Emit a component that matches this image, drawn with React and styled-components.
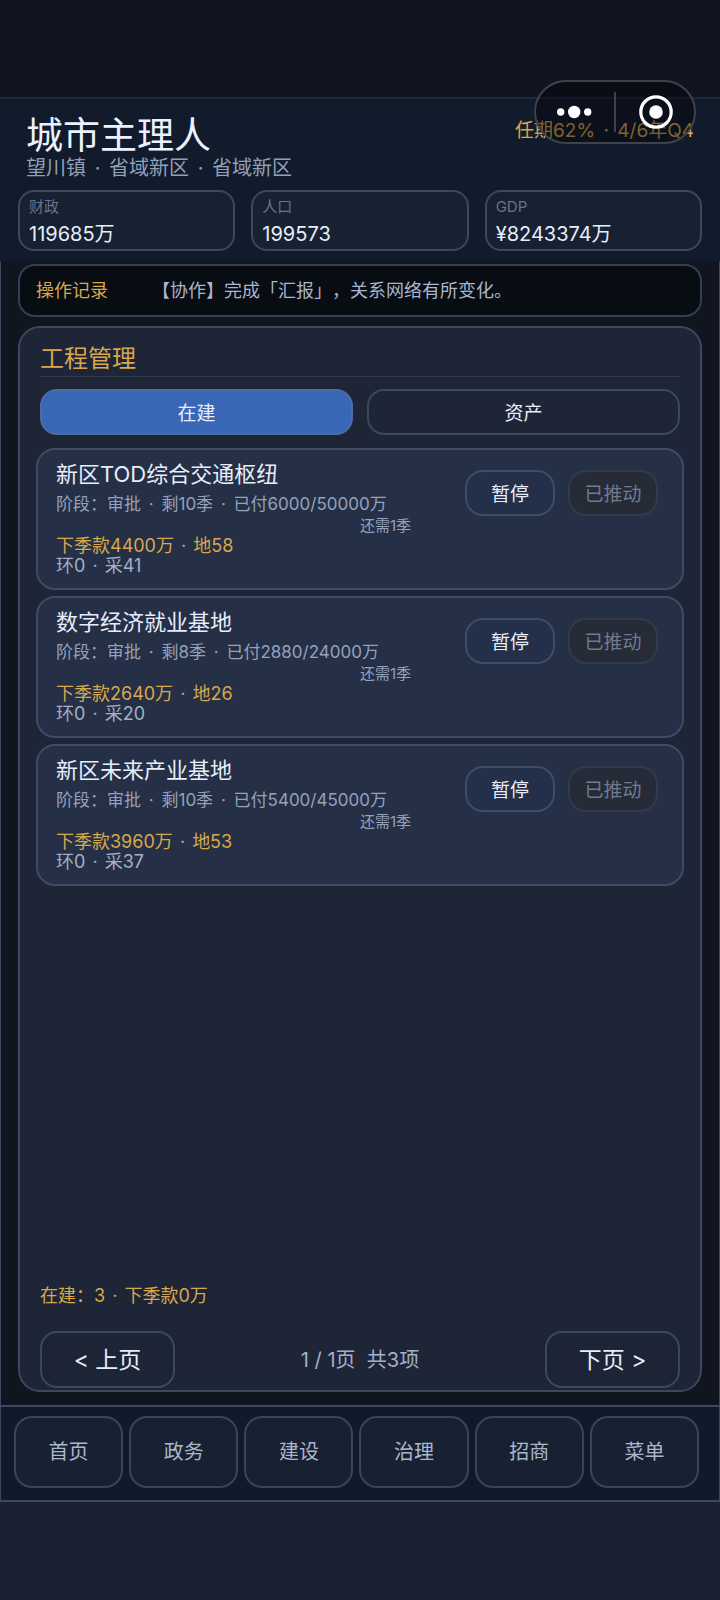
import React, { Fragment, useState } from "react";
import styled, { createGlobalStyle } from "styled-components";

const GlobalStyle = createGlobalStyle`
  *, *::before, *::after { box-sizing: border-box; }
  body {
    margin: 0;
    background: #1a2132;
    color: #e6edfb;
    font-family: Inter, "Noto Sans CJK SC", sans-serif;
    font-size: 18px;
    font-weight: 400;
    text-spacing-trim: space-all;
  }
  button { font-family: inherit; }
  h1, h2, h3, p, dl, dt, dd, ul { margin: 0; padding: 0; font-weight: 400; }
`;

const line = "#3a4860";
const gold = "#d9a74c";

const Screen = styled.div`
  position: relative;
  min-height: 100vh;
  display: flex;
  flex-direction: column;
  background: #10151f;
  padding-top: 97px;
`;

const Header = styled.header`
  background: #121b2b;
  border-top: 2px solid #1f2939;
  padding: 16px 18px 10px;
`;

const TitleRow = styled.div`
  display: flex;
  justify-content: space-between;
  padding: 0 8px;
`;

const AppTitle = styled.h1`
  font-size: 37px;
  line-height: 42px;
  color: #eaf1ff;
`;

const Place = styled.p`
  font-size: 20px;
  line-height: 22px;
  color: #93a1b8;
`;

const Term = styled.p`
  font-size: 19px;
  line-height: 32px;
  color: ${gold};
`;

const Dot = styled.span`
  margin: 0 ${(p) => (p.$wide ? 3 : 2)}px;
`;

const Stats = styled.dl`
  display: grid;
  grid-template-columns: repeat(3, 1fr);
  gap: 16px;
  padding-top: 11px;
`;

const Stat = styled.div`
  height: 61px;
  padding: 3px 9px;
  background: #182131;
  border: 2px solid ${line};
  border-radius: 16px;
`;

const StatName = styled.dt`
  font-size: 15px;
  line-height: 24px;
  color: #66748c;
`;

const StatValue = styled.dd`
  font-size: 20px;
  line-height: 30px;
`;

const Body = styled.div`
  flex: 1;
  display: flex;
  flex-direction: column;
  border: solid ${line};
  border-width: 0 1px 2px;
`;

const Main = styled.main`
  flex: 1;
  display: flex;
  flex-direction: column;
  gap: 9px;
  padding: 3px 17px 13px;
`;

const Log = styled.section`
  display: flex;
  align-items: center;
  gap: 44px;
  height: 53px;
  padding: 0 16px 4px;
  background: #080c13;
  border: 2px solid #353f51;
  border-radius: 17px;
`;

const LogTitle = styled.h2`
  font-size: 18px;
  color: ${gold};
`;

const LogText = styled.p`
  font-size: 18px;
  color: #a9b6cb;
`;

const Panel = styled.section`
  flex: 1;
  display: flex;
  flex-direction: column;
  padding: 14px 16px 2px;
  background: #1d2537;
  border: 2px solid ${line};
  border-radius: 22px;
`;

const PanelTitle = styled.h2`
  margin: 0 4px;
  height: 35px;
  font-size: 24px;
  line-height: 34px;
  color: ${gold};
  border-bottom: 1px solid #2d384b;
`;

const Tabs = styled.div`
  display: grid;
  grid-template-columns: 1fr 1fr;
  gap: 14px;
  margin: 12px 4px 13px;
`;

const Tab = styled.button`
  height: 46px;
  padding: 0 0 2px;
  font-size: 19px;
  color: #e6edfb;
  background: ${(p) => (p.$active ? "#3a67b5" : "transparent")};
  border: 2px solid ${(p) => (p.$active ? "#4c6da6" : line)};
  border-radius: 17px;
`;

const Cards = styled.div`
  flex: 1;
  display: flex;
  flex-direction: column;
  gap: 6px;
`;

const Card = styled.article`
  display: flex;
  align-items: flex-start;
  justify-content: space-between;
  height: 142px;
  padding: 10px 24px 0 18px;
  background: #252f46;
  border: 2px solid #3e4c66;
  border-radius: 19px;
`;

const Info = styled.div`
  display: flex;
  flex-direction: column;
`;

const CardTitle = styled.h3`
  font-size: 22px;
  line-height: 28px;
`;

const Stage = styled.p`
  padding-top: 2px;
  font-size: 17px;
  line-height: 28px;
  color: #94a2ba;
`;

const Note = styled.p`
  padding-left: 304px;
  font-size: 15px;
  line-height: 16px;
  color: #94a2ba;
`;

const Due = styled.p`
  padding-top: 2px;
  font-size: 18px;
  line-height: 20px;
  color: ${gold};
`;

const Extra = styled.p`
  font-size: 18px;
  line-height: 20px;
  color: #a3b0c8;
`;

const Actions = styled.div`
  display: flex;
  gap: 13px;
  padding-top: 10px;
`;

const Action = styled.button`
  width: 90px;
  height: 46px;
  padding: 0 0 1px;
  font-size: 19px;
  color: #e6edfb;
  background: #243049;
  border: 2px solid #3c4d69;
  border-radius: 18px;
  &:disabled {
    color: #707b8f;
    background: #262b38;
    border-color: #333a49;
  }
`;

const Summary = styled.p`
  margin: 0 4px;
  font-size: 18px;
  line-height: 26px;
  color: ${gold};
`;

const Pager = styled.nav`
  display: flex;
  align-items: center;
  justify-content: space-between;
  margin: 22px 4px 0;
`;

const PageButton = styled.button`
  width: 135px;
  height: 57px;
  padding: 0 0 4px;
  font-size: 23px;
  color: #e6edfb;
  background: #1c2436;
  border: 2px solid ${line};
  border-radius: 17px;
`;

const PageInfo = styled.p`
  padding-bottom: 2px;
  font-size: 20px;
  color: #a3b0c8;
  white-space: pre;
`;

const BottomNav = styled.nav`
  display: grid;
  grid-template-columns: repeat(6, 1fr);
  gap: 6px;
  padding: 9px 20px 12px 13px;
  background: #101a2b;
  border-top: 2px solid ${line};
`;

const NavItem = styled.button`
  height: 72px;
  padding: 0 0 4px;
  font-size: 20px;
  color: #a9b6cb;
  background: #182132;
  border: 2px solid #37455d;
  border-radius: 18px;
`;

const Footer = styled.div`
  height: 98px;
  background: #1a2132;
`;

const Capsule = styled.div`
  position: absolute;
  top: 80px;
  right: 24px;
  display: flex;
  width: 162px;
  height: 64px;
  background: rgba(2, 3, 8, 0.42);
  border: 2px solid #3d424c;
  border-radius: 32px;
`;

const CapsuleButton = styled.button`
  flex: 1;
  display: grid;
  place-items: center;
  padding: 0;
  color: #fff;
  background: none;
  border: 0;
`;

const CapsuleDivider = styled.span`
  width: 2px;
  margin: 10px 0;
  background: #3d424c;
`;

const stats = [
  ["财政", "119685万"],
  ["人口", "199573"],
  ["GDP", "¥8243374万"],
];

const projects = [
  { name: "新区TOD综合交通枢纽", stage: ["阶段：审批", "剩10季", "已付6000/50000万"], due: ["下季款4400万", "地58"], extra: ["环0", "采41"] },
  { name: "数字经济就业基地", stage: ["阶段：审批", "剩8季", "已付2880/24000万"], due: ["下季款2640万", "地26"], extra: ["环0", "采20"] },
  { name: "新区未来产业基地", stage: ["阶段：审批", "剩10季", "已付5400/45000万"], due: ["下季款3960万", "地53"], extra: ["环0", "采37"] },
];

const tabs = ["在建", "资产"];
const sections = ["首页", "政务", "建设", "治理", "招商", "菜单"];

function Dotted({ parts, wide }) {
  return parts.map((part, i) => (
    <Fragment key={i}>
      {i > 0 && <Dot $wide={wide}> · </Dot>}
      {part}
    </Fragment>
  ));
}

export default function App() {
  const [tab, setTab] = useState("在建");
  return (
    <Screen>
      <GlobalStyle />
      <Header>
        <TitleRow>
          <div>
            <AppTitle>城市主理人</AppTitle>
            <Place>
              <Dotted wide parts={["望川镇", "省域新区", "省域新区"]} />
            </Place>
          </div>
          <Term>
            <Dotted wide parts={["任期62%", "4/6年Q4"]} />
          </Term>
        </TitleRow>
        <Stats>
          {stats.map(([name, value]) => (
            <Stat key={name}>
              <StatName>{name}</StatName>
              <StatValue>{value}</StatValue>
            </Stat>
          ))}
        </Stats>
      </Header>
      <Body>
        <Main>
          <Log>
            <LogTitle>操作记录</LogTitle>
            <LogText>【协作】完成「汇报」，关系网络有所变化。</LogText>
          </Log>
          <Panel>
            <PanelTitle>工程管理</PanelTitle>
            <Tabs role="tablist">
              {tabs.map((t) => (
                <Tab key={t} role="tab" aria-selected={t === tab} $active={t === tab} onClick={() => setTab(t)}>
                  {t}
                </Tab>
              ))}
            </Tabs>
            <Cards>
              {projects.map((p) => (
                <Card key={p.name}>
                  <Info>
                    <CardTitle>{p.name}</CardTitle>
                    <Stage>
                      <Dotted wide parts={p.stage} />
                    </Stage>
                    <Note>还需1季</Note>
                    <Due>
                      <Dotted parts={p.due} />
                    </Due>
                    <Extra>
                      <Dotted parts={p.extra} />
                    </Extra>
                  </Info>
                  <Actions>
                    <Action>暂停</Action>
                    <Action disabled>已推动</Action>
                  </Actions>
                </Card>
              ))}
            </Cards>
            <Summary>
              <Dotted parts={["在建：3", "下季款0万"]} />
            </Summary>
            <Pager aria-label="分页">
              <PageButton>&lt; 上页</PageButton>
              <PageInfo>{"1 / 1页  共3项"}</PageInfo>
              <PageButton>下页 &gt;</PageButton>
            </Pager>
          </Panel>
        </Main>
        <BottomNav>
          {sections.map((s) => (
            <NavItem key={s}>{s}</NavItem>
          ))}
        </BottomNav>
      </Body>
      <Footer />
      <Capsule>
        <CapsuleButton aria-label="更多">
          <svg width="36" height="14" viewBox="0 0 36 14" fill="currentColor">
            <circle cx="3.7" cy="7" r="3.7" />
            <circle cx="17.2" cy="7" r="6.2" />
            <circle cx="30.7" cy="7" r="3.7" />
          </svg>
        </CapsuleButton>
        <CapsuleDivider />
        <CapsuleButton aria-label="关闭">
          <svg width="36" height="34" viewBox="0 0 36 34">
            <circle cx="19" cy="17" r="15.2" fill="none" stroke="currentColor" strokeWidth="3.2" />
            <circle cx="19" cy="17" r="6.8" fill="currentColor" />
          </svg>
        </CapsuleButton>
      </Capsule>
    </Screen>
  );
}
